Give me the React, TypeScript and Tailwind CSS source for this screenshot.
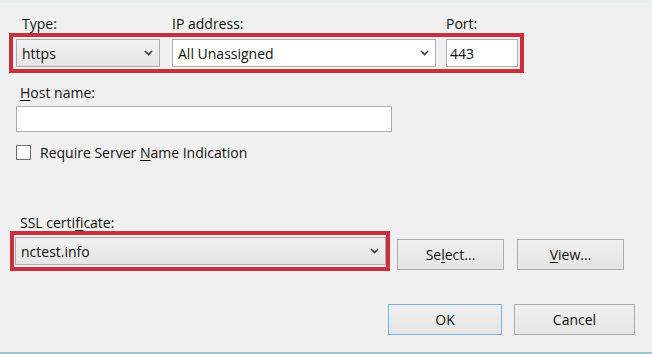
import React from 'react';

const Chevron: React.FC = () => (
  <svg width="9" height="6" viewBox="0 0 9 6" className="shrink-0">
    <path d="M1 1 L4.5 4.5 L8 1" fill="none" stroke="#3a3a3a" strokeWidth="1.6" />
  </svg>
);

const Combo: React.FC<{ value: string; width: string; white?: boolean }> = ({ value, width, white }) => (
  <div
    className={`${width} h-[28px] flex items-center justify-between pl-[5px] pr-[6px] border border-[#acacac] ${
      white ? 'bg-white' : 'bg-gradient-to-b from-[#f2f2f2] to-[#e5e5e5]'
    }`}
  >
    <span>{value}</span>
    <Chevron />
  </div>
);

const Button: React.FC<{ width: string; primary?: boolean; children: React.ReactNode }> = ({ width, primary, children }) => (
  <div
    className={`${width} h-[31px] flex items-center justify-center border bg-gradient-to-b from-[#f0f0f0] to-[#e5e5e5] ${
      primary ? 'border-[#7fb1e0]' : 'border-[#acacac]'
    }`}
  >
    {children}
  </div>
);

export default function App() {
  return (
    <div
      className="w-[652px] h-[354px] bg-[#f0f0f0] flex flex-col text-[14px] text-[#111] overflow-hidden border-t-[3px] border-[#e9eef0]"
      style={{ fontFamily: '"Open Sans", sans-serif' }}
    >
      {/* binding type / ip / port */}
      <div className="mt-[12px] h-[18px] leading-[18px] flex">
        <span className="ml-[22px] w-[150px]">Type:</span>
        <span className="w-[274px]">IP address:</span>
        <span>Port:</span>
      </div>
      <div className="ml-[9px] w-[515px] h-[40px] border-4 border-[#c9303b] flex items-center pl-[3px] gap-[12px]">
        <Combo value="https" width="w-[144px]" />
        <div className="flex gap-[10px]">
          <Combo value="All Unassigned" width="w-[264px]" white />
          <div className="w-[72px] h-[28px] flex items-center pl-[3px] border border-[#abadb3] bg-white">443</div>
        </div>
      </div>

      {/* host name */}
      <div className="mt-[11px] h-[18px] leading-[18px] ml-[20px]">
        <span className="underline underline-offset-2">H</span>ost name:
      </div>
      <div className="mt-[4px] ml-[16px] w-[376px] h-[26px] border border-[#abadb3] bg-white" />

      <div className="mt-[13px] ml-[16px] h-[15px] flex items-center gap-[9px]">
        <div className="w-[15px] h-[15px] border border-[#707070] bg-white" />
        <span>
          Require Server <span className="underline underline-offset-2">N</span>ame Indication
        </span>
      </div>

      {/* ssl certificate */}
      <div className="mt-[54px] h-[17px] leading-[17px] ml-[20px]">
        SSL certi<span className="underline underline-offset-2">f</span>icate:
      </div>
      <div className="flex items-start">
        <div className="ml-[10px] w-[380px] h-[40px] border-4 border-[#c9303b] flex items-center pl-[1px]">
          <Combo value="nctest.info" width="w-[371px]" />
        </div>
        <div className="mt-[8px] ml-[7px] flex gap-[13px]">
          <Button width="w-[107px]">
            <span>
              Se<span className="underline underline-offset-2">l</span>ect...
            </span>
          </Button>
          <Button width="w-[107px]">
            <span>
              <span className="underline underline-offset-2">V</span>iew...
            </span>
          </Button>
        </div>
      </div>

      {/* dialog buttons */}
      <div className="mt-[33px] flex justify-end pr-[17px] gap-[12px]">
        <Button width="w-[114px]" primary>
          OK
        </Button>
        <Button width="w-[121px]">Cancel</Button>
      </div>

      <div className="mt-auto h-[2px] bg-[#9fc3ca]" />
    </div>
  );
}
